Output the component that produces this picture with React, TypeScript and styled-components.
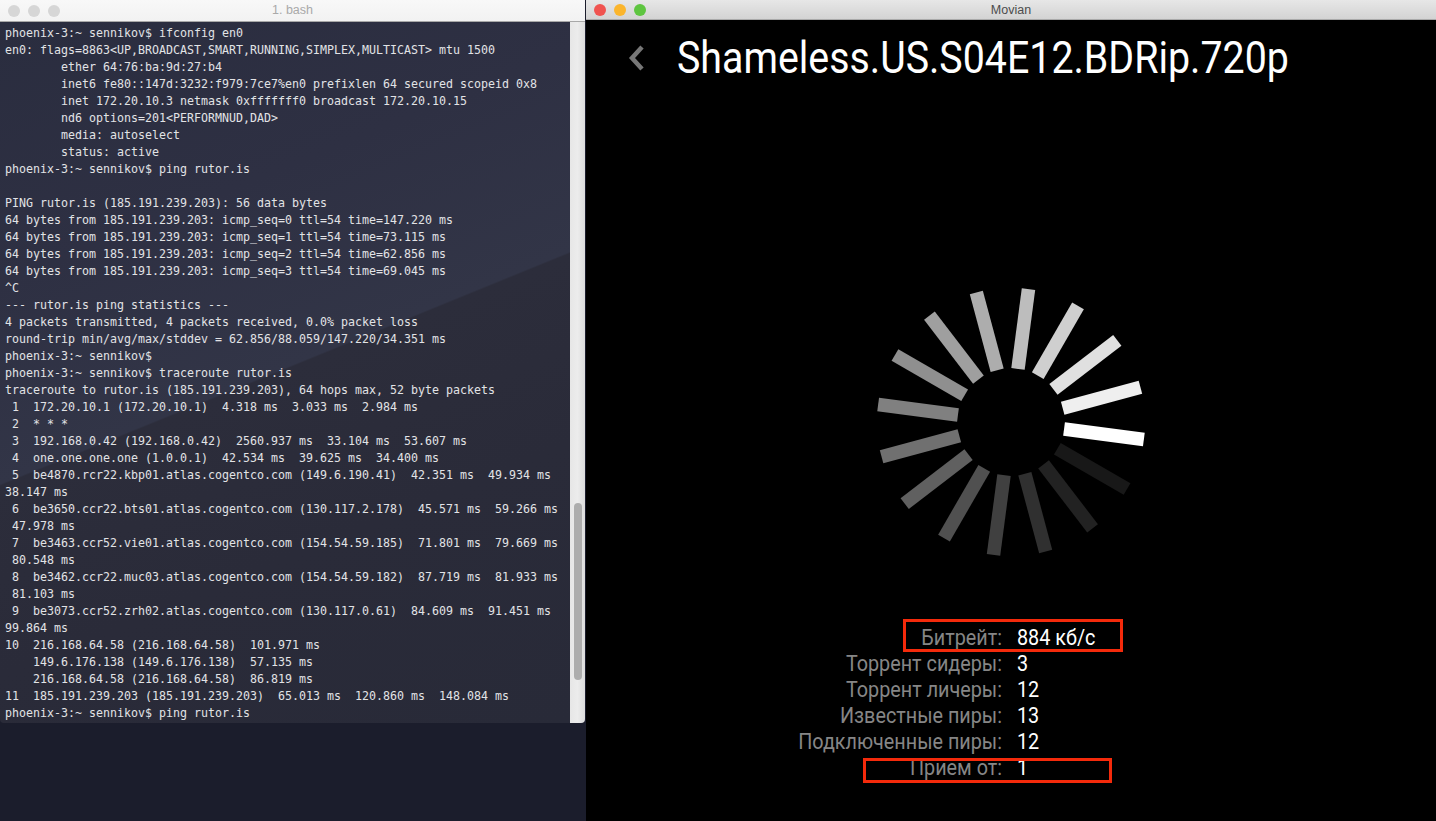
import React from "react";
import styled, { createGlobalStyle } from "styled-components";

const Global = createGlobalStyle`
  html, body { margin: 0; padding: 0; background: #000; }
  #root { width: 1436px; height: 821px; }
`;

const Screen = styled.div`
  position: relative;
  display: flex;
  width: 1436px;
  height: 821px;
  overflow: hidden;
  background: #000;
`;

const LeftColumn = styled.div`
  display: flex;
  flex-direction: column;
  width: 586px;
  flex: none;
  background: #1b1d2c;
`;

const TerminalWindow = styled.section`
  display: flex;
  flex-direction: column;
  width: 585px;
  height: 723px;
  border-bottom-right-radius: 4px;
  border-bottom-left-radius: 4px;
  overflow: hidden;
`;

const TitleBar = styled.header<{ $h: number; $bg: string; $line: string }>`
  position: relative;
  display: flex;
  align-items: center;
  gap: 8px;
  flex: none;
  height: ${(p) => p.$h}px;
  box-sizing: border-box;
  padding-left: 8px;
  background: ${(p) => p.$bg};
  border-bottom: 1px solid ${(p) => p.$line};
`;

const Light = styled.span<{ $c: string }>`
  width: 12px;
  height: 12px;
  border-radius: 50%;
  flex: none;
  background: ${(p) => p.$c};
`;

const WindowTitle = styled.span<{ $c: string }>`
  position: absolute;
  left: 0;
  right: 0;
  top: 0;
  text-align: center;
  font: 12.5px/20px "Liberation Sans", Arial, sans-serif;
  color: ${(p) => p.$c};
`;

const TerminalBody = styled.div`
  flex: 1;
  display: flex;
  min-height: 0;
`;

const Output = styled.pre`
  flex: 1;
  margin: 0;
  padding: 3px 0 0 5px;
  font: 11.63px/17px "DejaVu Sans Mono", "Liberation Mono", monospace;
  color: #e2e3e6;
  overflow: hidden;
  background: linear-gradient(
    157.8deg,
    #2a2d3f 0%,
    #2e3043 28%,
    #323547 49.5%,
    #2c2d3b 49.7%,
    #2a2b39 70%,
    #282a38 100%
  );
`;

const Track = styled.div`
  position: relative;
  width: 15px;
  flex: none;
  background: linear-gradient(90deg, #e6e6e6, #ececec 50%, #dcdcdc);
`;

const Thumb = styled.div`
  position: absolute;
  left: 4px;
  top: 481px;
  width: 8px;
  height: 177px;
  border-radius: 4px;
  background: #adadad;
`;

const Player = styled.main`
  flex: 1;
  display: flex;
  flex-direction: column;
  min-width: 0;
  background: #000;
`;

const Header = styled.div`
  display: flex;
  align-items: center;
  height: 76px;
  padding-left: 41px;
  flex: none;
`;

const Title = styled.h1`
  margin: 0 0 0 30px;
  font: 400 45px/76px Roboto, sans-serif;
  color: #fff;
  white-space: nowrap;
  transform: scaleX(0.874);
  transform-origin: left center;
`;

const SpinnerWrap = styled.div`
  display: flex;
  justify-content: center;
  padding-top: 191px;
  flex: none;
`;

const Stats = styled.dl`
  display: grid;
  grid-template-columns: 416px 1fr;
  grid-auto-rows: 26px;
  column-gap: 15px;
  margin: 68px 0 0;
  font: 400 21.5px/26px Roboto, sans-serif;
`;

const Label = styled.dt`
  color: #868686;
  text-align: right;
  white-space: nowrap;
  transform: scaleX(0.92);
  transform-origin: right center;
`;

const Value = styled.dd`
  margin: 0;
  color: #fff;
  white-space: nowrap;
  transform: scaleX(0.92);
  transform-origin: left center;
`;

const Annotation = styled.div<{ $x: number; $y: number; $w: number; $h: number }>`
  position: absolute;
  left: ${(p) => p.$x}px;
  top: ${(p) => p.$y}px;
  width: ${(p) => p.$w}px;
  height: ${(p) => p.$h}px;
  box-sizing: border-box;
  border: 3px solid #f42a0b;
`;

const lines = `phoenix-3:~ sennikov$ ifconfig en0
en0: flags=8863<UP,BROADCAST,SMART,RUNNING,SIMPLEX,MULTICAST> mtu 1500
        ether 64:76:ba:9d:27:b4
        inet6 fe80::147d:3232:f979:7ce7%en0 prefixlen 64 secured scopeid 0x8
        inet 172.20.10.3 netmask 0xfffffff0 broadcast 172.20.10.15
        nd6 options=201<PERFORMNUD,DAD>
        media: autoselect
        status: active
phoenix-3:~ sennikov$ ping rutor.is

PING rutor.is (185.191.239.203): 56 data bytes
64 bytes from 185.191.239.203: icmp_seq=0 ttl=54 time=147.220 ms
64 bytes from 185.191.239.203: icmp_seq=1 ttl=54 time=73.115 ms
64 bytes from 185.191.239.203: icmp_seq=2 ttl=54 time=62.856 ms
64 bytes from 185.191.239.203: icmp_seq=3 ttl=54 time=69.045 ms
^C
--- rutor.is ping statistics ---
4 packets transmitted, 4 packets received, 0.0% packet loss
round-trip min/avg/max/stddev = 62.856/88.059/147.220/34.351 ms
phoenix-3:~ sennikov$ 
phoenix-3:~ sennikov$ traceroute rutor.is
traceroute to rutor.is (185.191.239.203), 64 hops max, 52 byte packets
 1  172.20.10.1 (172.20.10.1)  4.318 ms  3.033 ms  2.984 ms
 2  * * *
 3  192.168.0.42 (192.168.0.42)  2560.937 ms  33.104 ms  53.607 ms
 4  one.one.one.one (1.0.0.1)  42.534 ms  39.625 ms  34.400 ms
 5  be4870.rcr22.kbp01.atlas.cogentco.com (149.6.190.41)  42.351 ms  49.934 ms
38.147 ms
 6  be3650.ccr22.bts01.atlas.cogentco.com (130.117.2.178)  45.571 ms  59.266 ms
 47.978 ms
 7  be3463.ccr52.vie01.atlas.cogentco.com (154.54.59.185)  71.801 ms  79.669 ms
 80.548 ms
 8  be3462.ccr22.muc03.atlas.cogentco.com (154.54.59.182)  87.719 ms  81.933 ms
 81.103 ms
 9  be3073.ccr52.zrh02.atlas.cogentco.com (130.117.0.61)  84.609 ms  91.451 ms
99.864 ms
10  216.168.64.58 (216.168.64.58)  101.971 ms
    149.6.176.138 (149.6.176.138)  57.135 ms
    216.168.64.58 (216.168.64.58)  86.819 ms
11  185.191.239.203 (185.191.239.203)  65.013 ms  120.860 ms  148.084 ms
phoenix-3:~ sennikov$ ping rutor.is`;

const stats: [string, string][] = [
  ["Битрейт:", "884 кб/с"],
  ["Торрент сидеры:", "3"],
  ["Торрент личеры:", "12"],
  ["Известные пиры:", "13"],
  ["Подключенные пиры:", "12"],
  ["Прием от:", "1"],
];

const shades = [
  "#ffffff", "#efefef", "#e0e0e0", "#cfcfcf", "#bdbdbd", "#adadad", "#9f9f9f", "#8f8f8f",
  "#808080", "#707070", "#606060", "#505050", "#404040", "#303030", "#222222", "#181818",
];

function Spinner() {
  return (
    <svg width="270" height="270" viewBox="-135 -135 270 270">
      {shades.map((c, i) => (
        <rect
          key={c}
          x="53.5"
          y="-6.75"
          width="80.5"
          height="13.5"
          fill={c}
          transform={`rotate(${7.5 - i * 22.5})`}
        />
      ))}
    </svg>
  );
}

export default function App() {
  return (
    <Screen>
      <Global />
      <LeftColumn>
        <TerminalWindow>
          <TitleBar $h={22} $bg="linear-gradient(180deg,#f8f8f8,#f2f2f2)" $line="#a8a8a8">
            <Light $c="#d6d6d6" />
            <Light $c="#d6d6d6" />
            <Light $c="#d6d6d6" />
            <WindowTitle $c="#a9a9a9">1. bash</WindowTitle>
          </TitleBar>
          <TerminalBody>
            <Output>{lines}</Output>
            <Track>
              <Thumb />
            </Track>
          </TerminalBody>
        </TerminalWindow>
      </LeftColumn>
      <Player>
        <TitleBar $h={20} $bg="linear-gradient(180deg,#e7e7e7,#d3d3d3)" $line="#a9a9a9">
          <Light $c="#f0534f" />
          <Light $c="#fbb52c" />
          <Light $c="#5ec540" />
          <WindowTitle $c="#4c4c4c">Movian</WindowTitle>
        </TitleBar>
        <Header>
          <svg width="20" height="28" viewBox="0 0 20 28">
            <path d="M15 3 L5 14 L15 25" fill="none" stroke="#777" strokeWidth="4.5" />
          </svg>
          <Title>Shameless.US.S04E12.BDRip.720p</Title>
        </Header>
        <SpinnerWrap>
          <Spinner />
        </SpinnerWrap>
        <Stats>
          {stats.map(([k, v]) => (
            <React.Fragment key={k}>
              <Label>{k}</Label>
              <Value>{v}</Value>
            </React.Fragment>
          ))}
        </Stats>
      </Player>
      <Annotation $x={903} $y={619} $w={220} $h={33} />
      <Annotation $x={863} $y={758} $w={249} $h={25} />
    </Screen>
  );
}
